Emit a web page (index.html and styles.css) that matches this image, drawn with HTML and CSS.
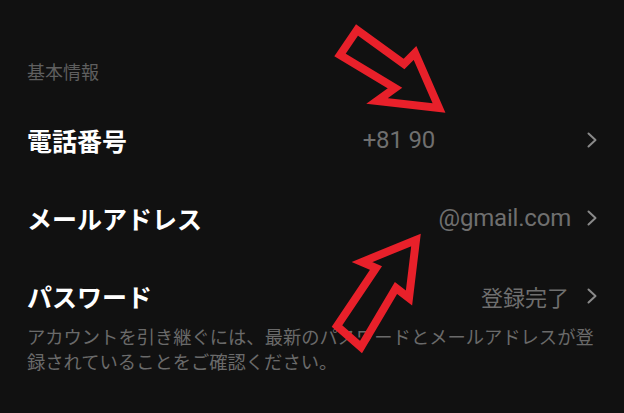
FILE: index.html
```html
<!DOCTYPE html>
<html lang="ja">

<head>
	<meta charset="UTF-8">
	<meta name="viewport" content="width=device-width, initial-scale=1.0">
	<title>アカウント</title>
	<link rel="stylesheet" href="styles.css">
</head>

<body>
	<main class="settings">
		<h2 class="section-title">基本情報</h2>

		<ul class="setting-list">
			<li class="setting-row">
				<span class="setting-label">電話番号</span>
				<span class="setting-value">+81 90<span class="masked"></span>
					<svg class="chevron" viewBox="0 0 10 16"><polyline points="1.5,1.5 8.5,8 1.5,14.5" /></svg>
				</span>
			</li>
			<li class="setting-row">
				<span class="setting-label">メールアドレス</span>
				<span class="setting-value">@gmail.com
					<svg class="chevron" viewBox="0 0 10 16"><polyline points="1.5,1.5 8.5,8 1.5,14.5" /></svg>
				</span>
			</li>
			<li class="setting-row">
				<span class="setting-label">パスワード</span>
				<span class="setting-value setting-value--jp">登録完了
					<svg class="chevron" viewBox="0 0 10 16"><polyline points="1.5,1.5 8.5,8 1.5,14.5" /></svg>
				</span>
			</li>
		</ul>

		<p class="setting-note">アカウントを引き継ぐには、最新のパスワードとメールアドレスが登録されていることをご確認ください。</p>
	</main>

	<!-- annotation arrows drawn over the screenshot -->
	<svg class="annotation" viewBox="0 0 624 413">
		<polygon points="357,30 340,55 395,88 377,101 439,108 415,53 404,64" />
		<polygon points="416,240 362,262 376,268 337,326 361,347 396,288 409,298" />
	</svg>
</body>

</html>
```

FILE: styles.css
```css
body {
	margin: 0;
	padding: 0;
	background-color: #111111;
	font-family: 'Roboto', 'Noto Sans CJK JP', sans-serif;
	color: #fff;
}

.settings {
	padding: 60px 27px 0;
	position: relative;
}

.section-title {
	margin: 0 0 26px;
	font-size: 18px;
	line-height: 26px;
	font-weight: 400;
	color: #5f5f5f;
}

.setting-list {
	list-style: none;
	margin: 0;
	padding: 0;
	display: flex;
	flex-direction: column;
	gap: 22px;
}

.setting-row {
	height: 56px;
	display: flex;
	align-items: center;
	justify-content: space-between;
}

.setting-label {
	font-size: 25px;
	font-weight: 700;
	color: #fff;
}

.setting-value {
	display: flex;
	align-items: center;
	font-size: 24px;
	color: #6f6f6f;
	letter-spacing: -0.2px;
}

.setting-value--jp {
	font-size: 22px;
	letter-spacing: 0;
}

.masked {
	display: inline-block;
	width: 136px;
}

.chevron {
	width: 10px;
	height: 16px;
	margin-left: 16px;
	fill: none;
	stroke: #8a8a8a;
	stroke-width: 2;
	stroke-linecap: round;
	stroke-linejoin: round;
}

.setting-value--jp .chevron {
	margin-left: 18px;
}

.setting-note {
	margin: 1px 0 0;
	font-size: 18.3px;
	line-height: 25px;
	color: #6a6a6a;
}

.annotation {
	position: absolute;
	top: 0;
	left: 0;
	width: 624px;
	height: 413px;
	pointer-events: none;
}

.annotation polygon {
	fill: none;
	stroke: #e8202a;
	stroke-width: 8;
	stroke-linejoin: miter;
}
```
